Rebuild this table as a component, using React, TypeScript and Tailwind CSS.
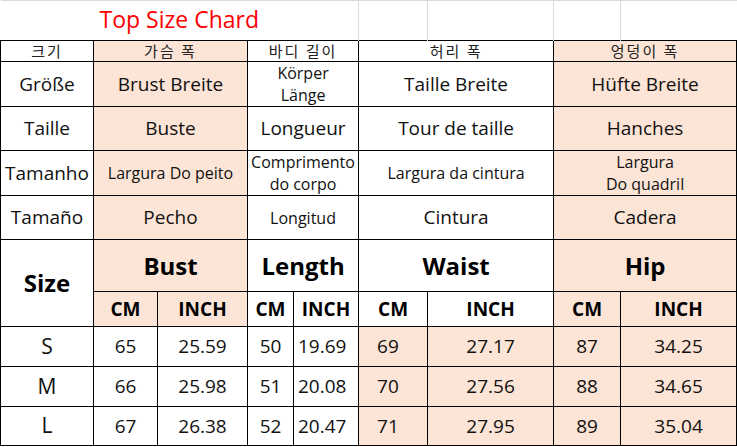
import React from "react";

interface CellProps {
  children?: React.ReactNode;
  className?: string;
  colSpan?: number;
  rowSpan?: number;
  fill?: boolean;
}

const Td = ({ children, className = "", colSpan, rowSpan, fill }: CellProps) => (
  <td
    colSpan={colSpan}
    rowSpan={rowSpan}
    className={`border border-black p-0 text-center align-middle ${
      fill ? "bg-[#fce4d6]" : "bg-white"
    } ${className}`}
  >
    {children}
  </td>
);

const sizes = [
  { size: "S", bust: ["65", "25.59"], length: ["50", "19.69"], waist: ["69", "27.17"], hip: ["87", "34.25"], h: "h-[40px]" },
  { size: "M", bust: ["66", "25.98"], length: ["51", "20.08"], waist: ["70", "27.56"], hip: ["88", "34.65"], h: "h-[40px]" },
  { size: "L", bust: ["67", "26.38"], length: ["52", "20.47"], waist: ["71", "27.95"], hip: ["89", "35.04"], h: "h-[39px]" },
];

export default function App() {
  return (
    <div className="w-[737px] h-[447px] overflow-hidden bg-white font-['Open_Sans','Noto_Sans_CJK_KR',sans-serif] text-[#111]">
      <table className="w-[736px] table-fixed border-collapse">
        <colgroup>
          <col className="w-[93px]" />
          <col className="w-[64px]" />
          <col className="w-[90px]" />
          <col className="w-[46px]" />
          <col className="w-[65px]" />
          <col className="w-[69px]" />
          <col className="w-[126px]" />
          <col className="w-[67px]" />
          <col className="w-[116px]" />
        </colgroup>
        <tbody>
          {/* title row, plain sheet gridlines on the right */}
          <tr className="h-[40px]">
            <td colSpan={5} className="border-t border-r border-[#dcdcdc] p-0 text-center align-middle">
              <span className="relative -top-[1px] text-[23px] text-[#ff0000]">Top Size Chard</span>
            </td>
            <td className="border-t border-r border-[#dcdcdc] p-0" />
            <td className="border-t border-r border-[#dcdcdc] p-0" />
            <td className="border-t border-r border-[#dcdcdc] p-0" />
            <td className="border-t border-[#dcdcdc] p-0" />
          </tr>

          {/* Korean */}
          <tr className="h-[21px] text-[15px] leading-[18px] font-['Noto_Sans_CJK_KR',sans-serif] font-normal tracking-[2px] text-[#222]">
            <Td>크기</Td>
            <Td colSpan={2} fill>가슴 폭</Td>
            <Td colSpan={2}>바디 길이</Td>
            <Td colSpan={2}>허리 폭</Td>
            <Td colSpan={2} fill>엉덩이 폭</Td>
          </tr>

          {/* German */}
          <tr className="h-[45px] text-[19px]">
            <Td>Größe</Td>
            <Td colSpan={2} fill>Brust Breite</Td>
            <Td colSpan={2} className="text-[16px] leading-[22px]">
              Körper
              <br />
              Länge
            </Td>
            <Td colSpan={2}>Taille Breite</Td>
            <Td colSpan={2} fill>Hüfte Breite</Td>
          </tr>

          {/* French */}
          <tr className="h-[44px] text-[19px]">
            <Td>Taille</Td>
            <Td colSpan={2} fill>Buste</Td>
            <Td colSpan={2}>Longueur</Td>
            <Td colSpan={2}>Tour de taille</Td>
            <Td colSpan={2} fill>Hanches</Td>
          </tr>

          {/* Portuguese */}
          <tr className="h-[44px] text-[16px] leading-[22px]">
            <Td className="text-[19px]">Tamanho</Td>
            <Td colSpan={2} fill>Largura Do peito</Td>
            <Td colSpan={2}>
              Comprimento
              <br />
              do corpo
            </Td>
            <Td colSpan={2}>Largura da cintura</Td>
            <Td colSpan={2} fill>
              Largura
              <br />
              Do quadril
            </Td>
          </tr>

          {/* Spanish */}
          <tr className="h-[44px] text-[19px]">
            <Td>Tamaño</Td>
            <Td colSpan={2} fill>Pecho</Td>
            <Td colSpan={2} className="text-[16px]">Longitud</Td>
            <Td colSpan={2}>Cintura</Td>
            <Td colSpan={2} fill>Cadera</Td>
          </tr>

          {/* English header */}
          <tr className="h-[52px] text-[24px] font-bold text-black">
            <Td rowSpan={2}>Size</Td>
            <Td colSpan={2} fill>Bust</Td>
            <Td colSpan={2}>Length</Td>
            <Td colSpan={2}>Waist</Td>
            <Td colSpan={2} fill>Hip</Td>
          </tr>
          <tr className="h-[35px] text-[19px] font-bold text-black">
            <Td fill>CM</Td>
            <Td fill>INCH</Td>
            <Td>CM</Td>
            <Td>INCH</Td>
            <Td>CM</Td>
            <Td>INCH</Td>
            <Td fill>CM</Td>
            <Td fill>INCH</Td>
          </tr>

          {sizes.map((s) => (
            <tr key={s.size} className={`${s.h} text-[19px]`}>
              <Td className="text-[21px]">{s.size}</Td>
              <Td>{s.bust[0]}</Td>
              <Td>{s.bust[1]}</Td>
              <Td>{s.length[0]}</Td>
              <Td className="text-left pl-[4px]">{s.length[1]}</Td>
              <Td fill className="text-left pl-[18px]">{s.waist[0]}</Td>
              <Td fill>{s.waist[1]}</Td>
              <Td fill>{s.hip[0]}</Td>
              <Td fill>{s.hip[1]}</Td>
            </tr>
          ))}
        </tbody>
      </table>
    </div>
  );
}
